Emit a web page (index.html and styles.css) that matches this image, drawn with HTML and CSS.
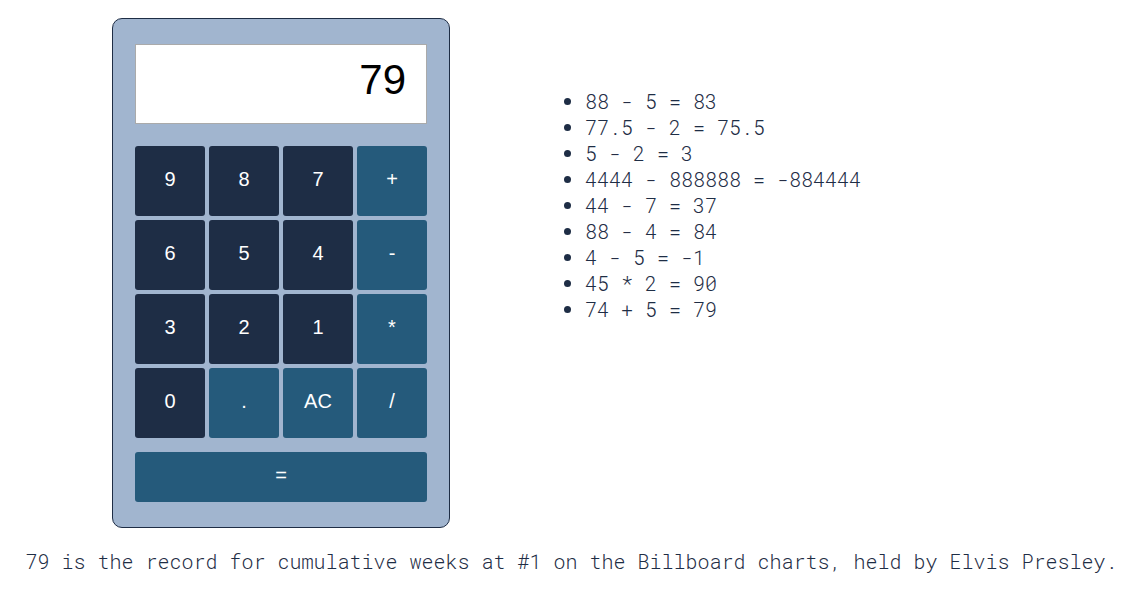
FILE: index.html
```html
<!DOCTYPE html>
<html lang="en">
<head>
    <meta charset="UTF-8">
    <meta name="viewport" content="width=device-width, initial-scale=1.0">
    <title>Calculator</title>
    <link rel="stylesheet" href="styles.css">
</head>
<body>
    <div class="app">
        <div class="calculator">
            <div class="display">79</div>
            <div class="keys">
                <button class="key">9</button>
                <button class="key">8</button>
                <button class="key">7</button>
                <button class="key op">+</button>
                <button class="key">6</button>
                <button class="key">5</button>
                <button class="key">4</button>
                <button class="key op">-</button>
                <button class="key">3</button>
                <button class="key">2</button>
                <button class="key">1</button>
                <button class="key op">*</button>
                <button class="key">0</button>
                <button class="key op">.</button>
                <button class="key op">AC</button>
                <button class="key op">/</button>
            </div>
            <button class="key op equals">=</button>
        </div>

        <!-- historial -->
        <ul class="history">
            <li>88 - 5 = 83</li>
            <li>77.5 - 2 = 75.5</li>
            <li>5 - 2 = 3</li>
            <li>4444 - 888888 = -884444</li>
            <li>44 - 7 = 37</li>
            <li>88 - 4 = 84</li>
            <li>4 - 5 = -1</li>
            <li>45 * 2 = 90</li>
            <li>74 + 5 = 79</li>
        </ul>
    </div>

    <p class="fact">79 is the record for cumulative weeks at #1 on the Billboard charts, held by Elvis Presley.</p>
</body>
</html>
```

FILE: styles.css
```css
body {
    margin: 8px;
    font-family: "Roboto Mono", "Liberation Mono", monospace;
    font-weight: 300;
    color: #1e2d45;
    background-color: #fff;
}

.app {
    display: flex;
    align-items: flex-start;
    gap: 95px;
    padding: 10px 0 0 104px;
}

.calculator {
    width: 338px;
    box-sizing: border-box;
    padding: 25px 22px 25px;
    background-color: #a1b5cf;
    border: 1px solid #1e2d45;
    border-radius: 10px;
}

.display {
    height: 80px;
    box-sizing: border-box;
    display: flex;
    align-items: center;
    justify-content: flex-end;
    padding: 0 20px 8px 0;
    background-color: #fff;
    border: 1px solid #aaa;
    font-family: "Liberation Sans", Arial, sans-serif;
    font-weight: 400;
    font-size: 42px;
    color: #000;
}

.keys {
    display: grid;
    grid-template-columns: repeat(4, 70px);
    grid-auto-rows: 70px;
    gap: 4px;
    margin-top: 22px;
}

.key {
    border: none;
    border-radius: 3px;
    background-color: #1e2d45;
    color: #fff;
    font-family: "Liberation Sans", Arial, sans-serif;
    font-weight: 400;
    font-size: 20px;
    padding: 0 0 3px;
    cursor: pointer;
}

.key.op {
    background-color: #255a7b;
}

.equals {
    display: block;
    width: 100%;
    height: 50px;
    margin-top: 14px;
}

.history {
    margin: 70px 0 0;
    padding-left: 40px;
    font-size: 20px;
    line-height: 26px;
}

.fact {
    margin: 20px 0 0;
    padding-left: 7px;
    text-align: center;
    font-size: 20px;
    line-height: 26px;
}
```
